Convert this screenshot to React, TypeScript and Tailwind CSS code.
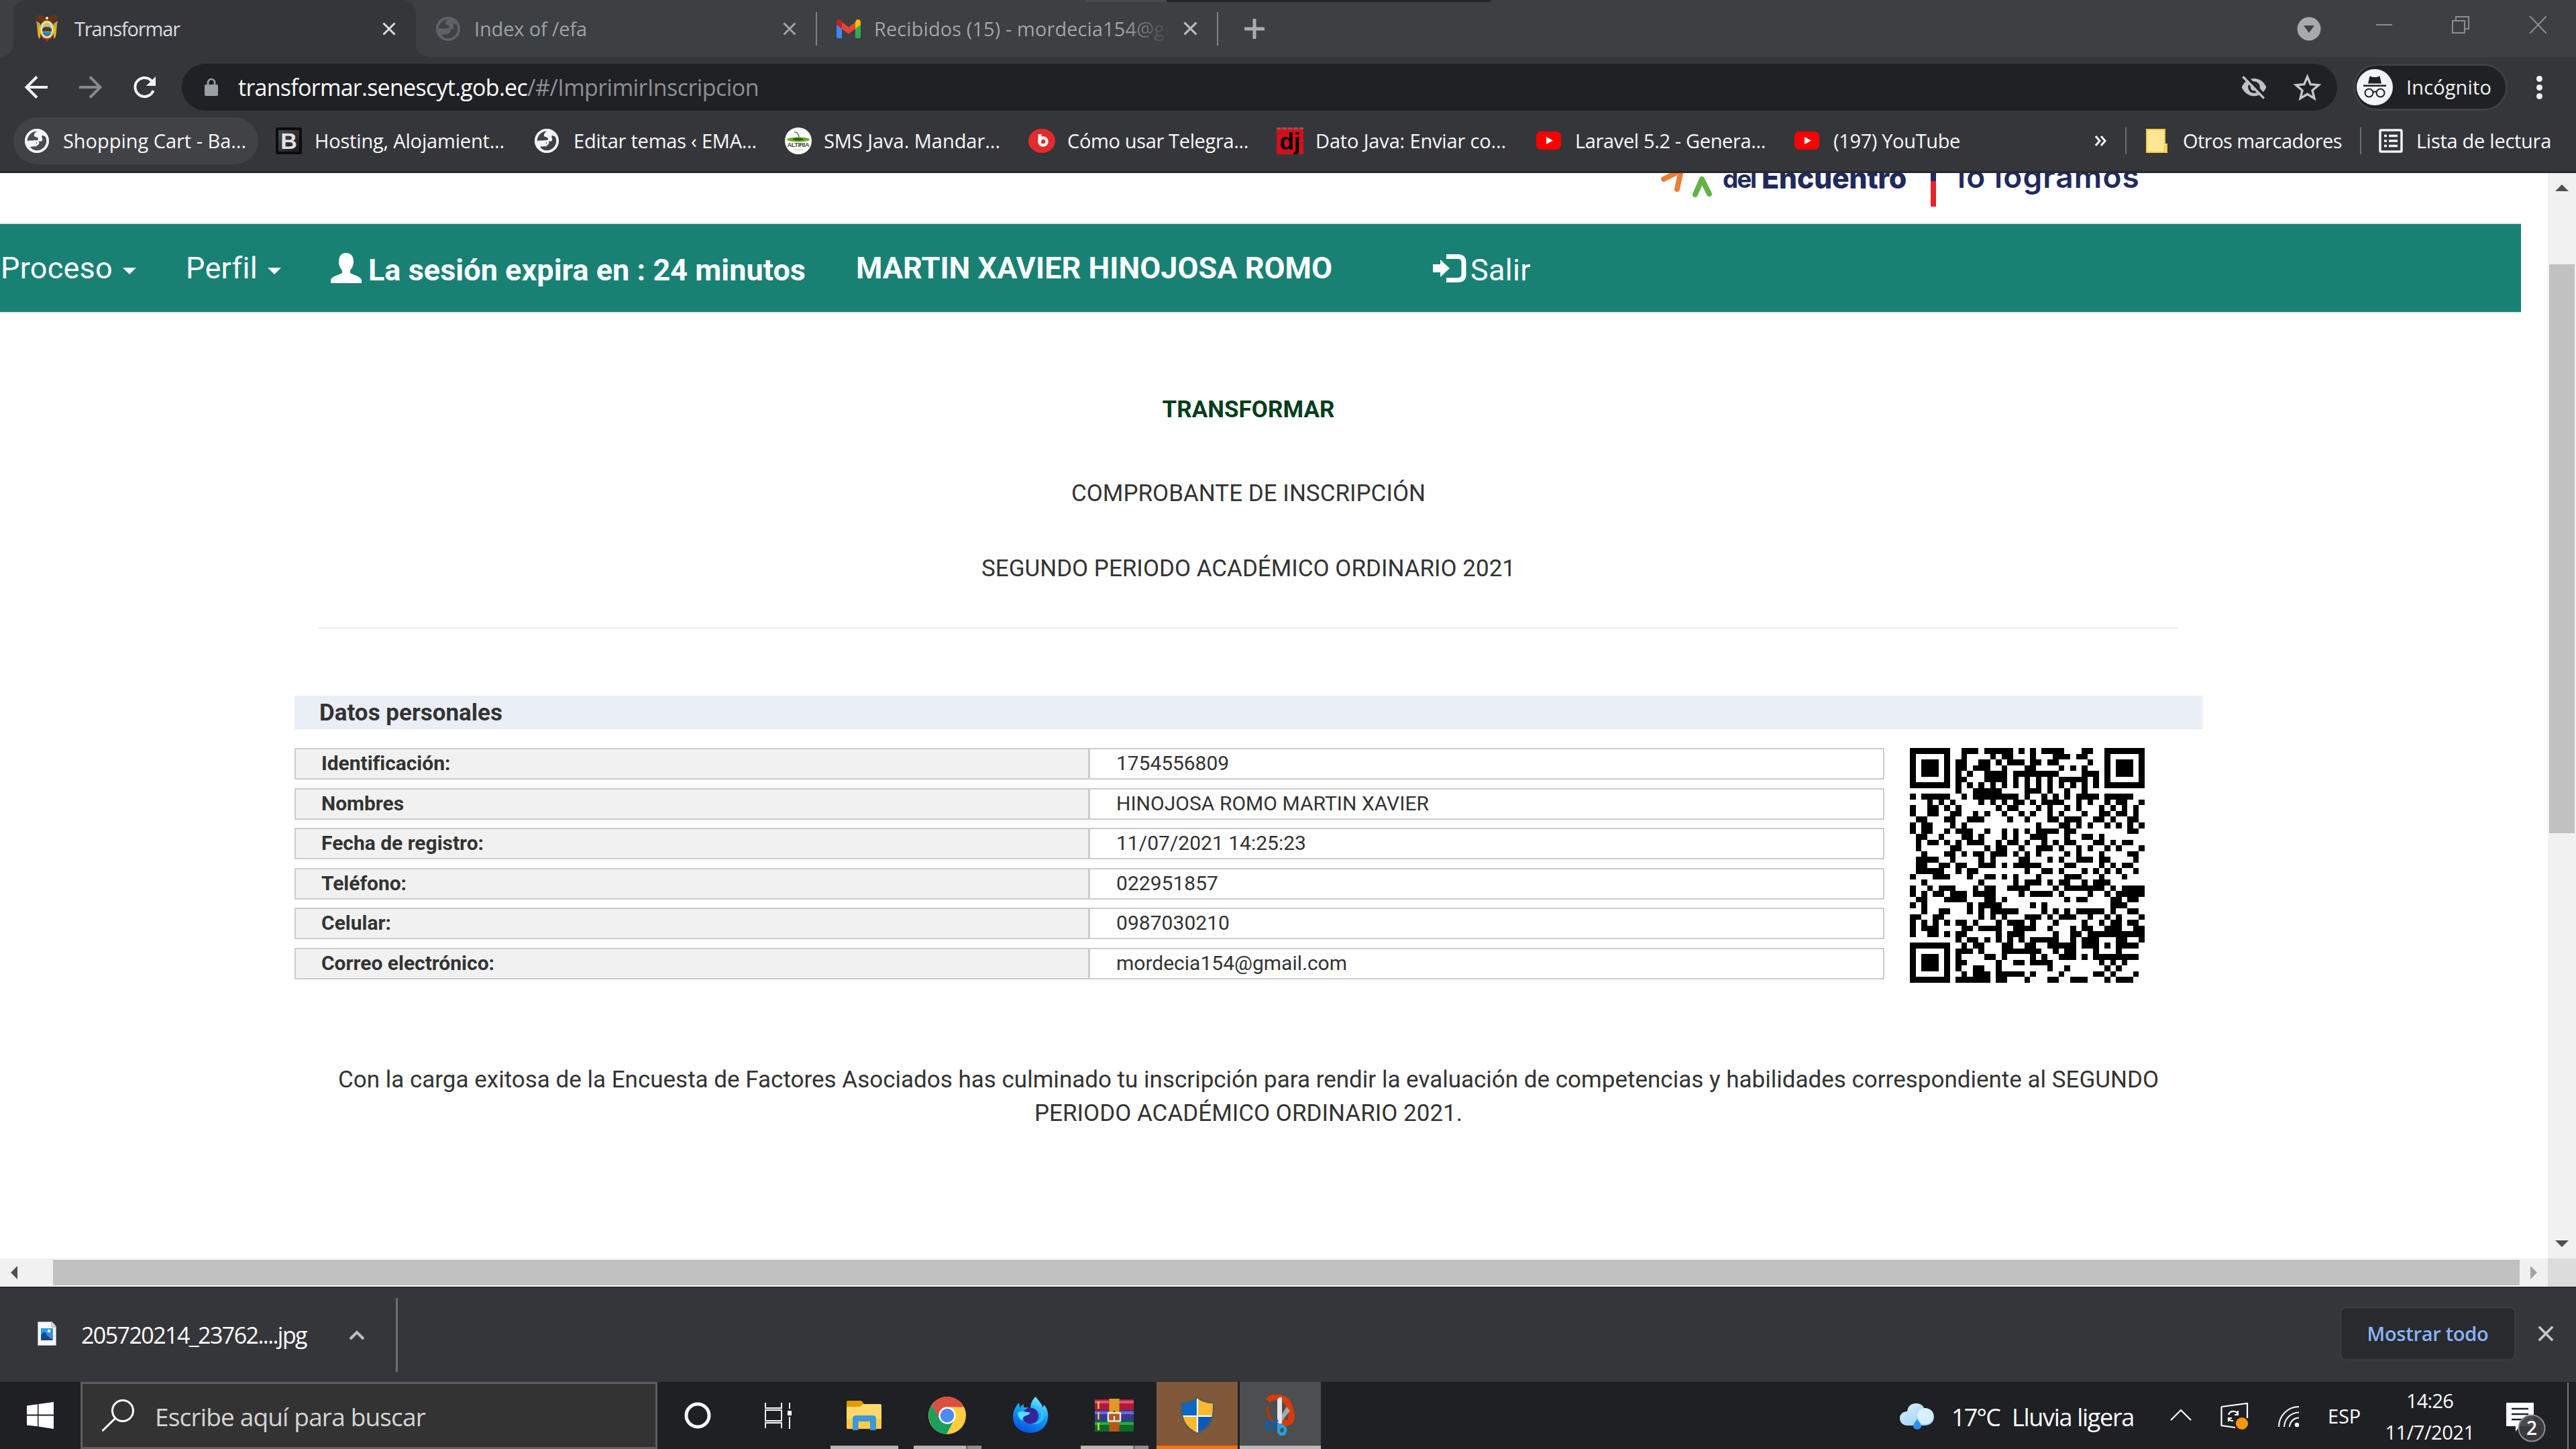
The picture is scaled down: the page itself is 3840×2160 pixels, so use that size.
import { useLayoutEffect, useRef, useState } from "react";
import type { ReactNode } from "react";

/* One line of text whose letter spacing is tuned so that it spans `w` pixels. */
function Fit({ w, className = "", children }: { w: number; className?: string; children: string }) {
  const ref = useRef<HTMLSpanElement>(null);
  const [spacing, setSpacing] = useState(0);
  useLayoutEffect(() => {
    if (ref.current) {
      const natural = ref.current.getBoundingClientRect().width;
      setSpacing((w - natural) / children.length);
    }
  }, [w, children]);
  return (
    <span ref={ref} className={"inline-block whitespace-pre shrink-0 " + className} style={{ letterSpacing: spacing + "px" }}>
      {children}
    </span>
  );
}

function Globe({ color, hole, className }: { color: string; hole: string; className: string }) {
  return (
    <svg viewBox="0 0 36 36" className={className}>
      <circle cx="18" cy="18" r="18" fill={color} />
      <path d="M20 3C15 5 13 8 14 11c2 2 6 1 6 4 0 3-5 2-8 3-3 0-5 1-9 0C3 9 10 2 20 3z" fill={hole} opacity=".95" />
      <path d="M21 33c-6 0-10-2-13-6 3-1 8 0 9-3 1-2-2-4 1-5 4-1 7 1 8-2 1-2-2-5 0-7 2 0 5 1 6 4 3 10-4 18-11 19z" fill={hole} opacity=".95" />
      <circle cx="18" cy="18" r="16" fill="none" stroke={color} strokeWidth="3.5" />
      <path d="M5 19h7c4-1 8 0 8 2s-4 3-5 5" fill="none" stroke={color} strokeWidth="3" />
    </svg>
  );
}

function Cross({ className }: { className: string }) {
  return (
    <svg viewBox="0 0 20 20" className={className}>
      <path d="M1.5 1.5l17 17M18.5 1.5l-17 17" stroke="currentColor" strokeWidth="3" fill="none" />
    </svg>
  );
}

function YouTube() {
  return (
    <svg viewBox="0 0 38 28" className="w-[38px] h-[28px]">
      <rect width="37" height="27" rx="7" fill="#f00" />
      <path d="M15 8l10 5.5L15 19z" fill="#fff" />
    </svg>
  );
}

function Crest() {
  return (
    <svg viewBox="0 0 36 40" className="w-[36px] h-[40px] shrink-0">
      <path d="M1 1c5-2 11-1 14 2l3-2 3 2c3-3 9-4 14-2-2 5-6 7-10 8H11C7 8 3 6 1 1z" fill="#6b3410" />
      <path d="M2 8l6 4v20l-1 3C3 32 4 16 2 8zM34 8l-6 4v20l1 3c4-3 3-19 5-27z" fill="#b9a15a" />
      <path d="M5 18l3-4v20l-3-4zM31 18l-3-4v20l3-4z" fill="#e8b800" />
      <path d="M8 26l4 9 3 1-3-12zM28 26l-4 9-3 1 3-12z" fill="#c8202c" />
      <ellipse cx="18" cy="21" rx="11" ry="13.500" fill="#f4c400" />
      <ellipse cx="18" cy="21" rx="9" ry="12" fill="#e8e8ee" />
      <ellipse cx="18" cy="21" rx="7" ry="10.500" fill="#79c9ee" />
      <circle cx="18" cy="14" r="3" fill="#f2b93a" />
      <path d="M11 20c3-4 11-4 14 0v4H11z" fill="#5a3a1c" />
      <path d="M11.500 25h13c-1 4-4 6-6.500 6s-5.500-2-6.500-6z" fill="#2b7fae" />
      <path d="M15 35h6l-3 5z" fill="#cf1f2c" />
      <circle cx="18" cy="4" r="2" fill="#eee" />
    </svg>
  );
}

function Gmail() {
  return (
    <svg viewBox="0 0 36 28" className="w-[36px] h-[28px] shrink-0">
      <path d="M0 4v21.500Q0 28 2.500 28H8V10z" fill="#4285f4" />
      <path d="M36 4v21.500Q36 28 33.500 28H28V10z" fill="#34a853" />
      <path d="M28 4v10l8-6V4c0-4-4-5-6.500-3z" fill="#fbbc04" />
      <path d="M8 14V4l10 7.500L28 4v10l-10 7.500z" fill="#ea4335" />
      <path d="M0 4v4l8 6V4L6.500 1C4-1 0 0 0 4z" fill="#c5221f" />
    </svg>
  );
}

const bookmarks: { box: string; text: string; w: number; icon: ReactNode }[] = [
  { box: "w-[374px]", text: "Shopping Cart - Ba...", w: 273, icon: <Globe color="#f1f3f4" hole="#414246" className="w-[36px] h-[36px]" /> },
  {
    box: "w-[386px]", text: "Hosting, Alojamient...", w: 283,
    icon: (
      <span className="w-[39px] h-[40px] rounded-[3px] border-[4px] border-[#0c0c0c] bg-gradient-to-br from-[#4a4a4a] to-[#1c1c1c] flex items-center justify-center font-['Liberation_Sans'] font-bold text-[34px] leading-none text-[#e2e2e2]">B</span>
    ),
  },
  { box: "w-[373px]", text: "Editar temas ‹ EMA...", w: 273, icon: <Globe color="#f1f3f4" hole="#35363a" className="w-[36px] h-[36px]" /> },
  {
    box: "w-[363px]", text: "SMS Java. Mandar...", w: 263,
    icon: (
      <svg viewBox="0 0 40 40" className="w-[40px] h-[40px]">
        <circle cx="20" cy="20" r="20" fill="#fff" />
        <ellipse cx="20" cy="18" rx="17" ry="3.600" fill="#6fae2c" />
        <ellipse cx="20" cy="17.500" rx="8" ry="2" fill="#2f5d16" />
        <path d="M14 7q7 0 7 9" stroke="#5d7f4a" strokeWidth="1.500" fill="none" />
        <text x="20" y="29" fontSize="9.500" fontWeight="700" textAnchor="middle" fontFamily="Liberation Sans" fill="#3f4f3a" textLength="33">ALTIRIA</text>
        <path d="M13 33h14" stroke="#ccc" strokeWidth="1" />
      </svg>
    ),
  },
  {
    box: "w-[370px]", text: "Cómo usar Telegra...", w: 270,
    icon: (
      <svg viewBox="0 0 40 36" className="w-[40px] h-[36px]">
        <ellipse cx="20" cy="18" rx="20" ry="18" fill="#e22b2f" />
        <path d="M17 8v11" stroke="#fff" strokeWidth="5" />
        <circle cx="22" cy="19" r="5.500" stroke="#fff" strokeWidth="4.500" fill="none" />
      </svg>
    ),
  },
  {
    box: "w-[387px]", text: "Dato Java: Enviar co...", w: 284,
    icon: (
      <span className="w-[40px] h-[40px] bg-[#d0111b] border-t-[3px] border-dashed border-[#8a5a5c] flex items-center justify-center font-['Liberation_Sans'] text-[35px] leading-none text-black font-bold pb-[3px]">dj</span>
    ),
  },
  { box: "w-[385px]", text: "Laravel 5.2 - Genera...", w: 284, icon: <YouTube /> },
  { box: "w-[439px]", text: "(197) YouTube", w: 189, icon: <YouTube /> },
];

function TabStrip() {
  return (
    <div className="relative h-[85px] flex items-center bg-[#3c4043] text-[29px]">
      <div className="absolute left-[1619px] top-0 flex h-[3px]">
        <div className="w-[120px] bg-[#4c4846]" />
        <div className="w-[483px] bg-[#232323]" />
      </div>
      <div className="w-[20px] h-[85px] bg-[#35363a] shrink-0"><div className="w-full h-full bg-[#3c4043] rounded-br-[20px]" /></div>
      <div className="w-[600px] h-[85px] bg-[#35363a] rounded-t-[20px] flex items-center pl-[32px] shrink-0 text-[#dadce0]">
        <Crest />
        <div className="w-[482px] pl-[23px] flex shrink-0"><Fit w={157}>Transformar</Fit></div>
        <Cross className="w-[20px] h-[20px]" />
      </div>
      <div className="w-[20px] h-[85px] bg-[#35363a] shrink-0"><div className="w-full h-full bg-[#3c4043] rounded-bl-[20px]" /></div>
      <div className="flex items-center pl-[10px] w-[576px] text-[#9fa2a6] shrink-0">
        <Globe color="#5f6368" hole="#3c4043" className="w-[36px] h-[36px] shrink-0" />
        <div className="w-[481px] pl-[21px] flex shrink-0"><Fit w={168}>Index of /efa</Fit></div>
        <Cross className="w-[20px] h-[20px]" />
      </div>
      <div className="w-[2px] h-[50px] bg-[#7f8286] shrink-0" />
      <div className="flex items-center pl-[29px] w-[596px] text-[#a2a5a9] shrink-0">
        <Gmail />
        <div className="w-[460px] pl-[20px] flex shrink-0 overflow-hidden [mask-image:linear-gradient(to_right,black_390px,transparent_460px)]">
          <Fit w={460}>Recibidos (15) - mordecia154@gm</Fit>
        </div>
        <Cross className="w-[21px] h-[21px] ml-[21px] shrink-0 text-[#b9bbbe]" />
      </div>
      <div className="w-[2px] h-[50px] bg-[#7f8286] shrink-0" />
      <svg viewBox="0 0 30 30" className="w-[30px] h-[30px] ml-[39px]"><path d="M15 0v30M0 15h30" stroke="#a9acaf" strokeWidth="5" /></svg>
      <svg viewBox="0 0 36 36" className="w-[36px] h-[36px] ml-auto">
        <circle cx="18" cy="18" r="17.500" fill="#a7aaad" />
        <path d="M10 13h16l-8 11z" fill="#3c4043" />
      </svg>
      <svg viewBox="0 0 254 26" className="w-[254px] h-[26px] ml-[82px] mr-[44px] mb-[12px]" fill="none" stroke="#8b8e91" strokeWidth="2">
        <path d="M0 13h24" />
        <path d="M114 7h18v18h-18zM119 7V1h19v18h-6" />
        <path d="M229 0l25 26M254 0l-25 26" />
      </svg>
    </div>
  );
}

function Toolbar() {
  return (
    <div className="h-[90px] flex items-center bg-[#35363a]">
      <svg viewBox="0 0 200 36" className="w-[200px] h-[36px] ml-[35px] shrink-0" fill="none" strokeWidth="4">
        <path d="M36 18H5M20 2.500L4.500 18 20 33.500" stroke="#f1f3f4" />
        <path d="M83 18h31M99 2.500L114.500 18 99 33.500" stroke="#86888b" />
        <path d="M192 10A14 14 0 1 0 193.500 23" stroke="#f1f3f4" />
        <path d="M197 2v14h-14z" fill="#f1f3f4" />
      </svg>
      <div className="ml-[36px] w-[3213px] h-[70px] rounded-full bg-[#202124] flex items-center text-[34px] shrink-0">
        <svg viewBox="0 0 20 28" className="w-[20px] h-[28px] ml-[34px]">
          <rect y="10" width="20" height="17" rx="2" fill="#9aa0a6" />
          <path d="M5 11V7a5 5 0 0 1 10 0v4" fill="none" stroke="#9aa0a6" strokeWidth="2.600" />
        </svg>
        <div className="flex ml-[30px]">
          <Fit w={431} className="text-white">transformar.senescyt.gob.ec</Fit>
          <Fit w={345} className="text-[#8c9095]">/#/ImprimirInscripcion</Fit>
        </div>
        <svg viewBox="0 0 24 24" className="w-[42px] h-[42px] ml-auto mr-[37px]">
          <path d="M1.500 12C3.300 7.500 7.300 4.500 12 4.500S20.700 7.500 22.500 12c-1.800 4.500-5.800 7.500-10.500 7.500S3.300 16.500 1.500 12z" fill="#bdc1c6" />
          <circle cx="12" cy="12" r="5" fill="#202124" />
          <circle cx="12" cy="12" r="3" fill="#bdc1c6" />
          <path d="M4 1.500L22 20" stroke="#202124" strokeWidth="2.500" />
          <path d="M2.500 3L20.500 21.500" stroke="#bdc1c6" strokeWidth="2" />
        </svg>
        <svg viewBox="0 0 24 24" className="w-[43px] h-[43px] mr-[23px]">
          <path d="M12 3l2.600 6.300 6.800.6-5.200 4.500 1.600 6.600-5.800-3.500-5.800 3.500 1.600-6.600L2.600 9.900l6.800-.6z" fill="none" stroke="#c4c7ca" strokeWidth="1.900" />
        </svg>
      </div>
      <div className="ml-[24px] w-[230px] h-[70px] rounded-full border-[3px] border-[#3f4145] bg-[#202124] flex items-center text-[29px] text-[#f1f3f4] shrink-0">
        <svg viewBox="0 0 54 54" className="w-[54px] h-[54px] ml-[2px] mr-[20px]">
          <circle cx="27" cy="27" r="27" fill="#f1f3f4" />
          <path d="M19.500 10.500q3 .5 4.500 1.500h6q1.500-1 4.500-1.500L37 21.500H17z" fill="#202124" />
          <path d="M10 24.800h34" stroke="#202124" strokeWidth="2.600" />
          <g fill="none" stroke="#202124" strokeWidth="2"><circle cx="18.500" cy="35.500" r="6" /><circle cx="35.500" cy="35.500" r="6" /><path d="M24.500 34.500q2.500-2 5 0" /></g>
        </svg>
        <Fit w={127}>Incógnito</Fit>
      </div>
      <div className="ml-[43px] flex flex-col gap-[4px]">
        <div className="w-[9px] h-[9px] rounded-full bg-[#f1f3f4]" />
        <div className="w-[9px] h-[9px] rounded-full bg-[#f1f3f4]" />
        <div className="w-[9px] h-[9px] rounded-full bg-[#f1f3f4]" />
      </div>
    </div>
  );
}

function BookmarksBar() {
  return (
    <div className="h-[80px] pb-[10px] flex items-center bg-[#35363a] text-[29px] text-[#f8f9fa]">
      <div className="w-[37px] shrink-0" />
      {bookmarks.map((b, i) => (
        <div key={b.text} className={"flex items-center h-[70px] shrink-0 " + b.box}>
          {i === 0 ? (
            <div className="flex items-center h-[70px] w-[365px] -ml-[17px] pl-[17px] rounded-full bg-[#414246]">
              {b.icon}
              <Fit w={b.w} className="ml-[21px]">{b.text}</Fit>
            </div>
          ) : (
            <>
              <span className="w-[40px] flex shrink-0">{b.icon}</span>
              <Fit w={b.w} className="ml-[18px]">{b.text}</Fit>
            </>
          )}
        </div>
      ))}
      <svg viewBox="0 0 17 16" className="w-[17px] h-[16px] ml-[9px]" fill="none" stroke="#f1f3f4" strokeWidth="3"><path d="M1 1l6 7-6 7M9 1l6 7-6 7" /></svg>
      <div className="w-[2px] h-[40px] ml-[28px] bg-[#6d6f73]" />
      <svg viewBox="0 0 32 36" className="w-[32px] h-[36px] ml-[29px]">
        <path d="M0 0h29v22h3v14H0z" fill="#ffe693" />
        <path d="M1 1h27v22M1 1v34h30V24l-3 3v8" fill="none" stroke="#efca4a" strokeWidth="2" />
      </svg>
      <Fit w={237} className="ml-[23px]">Otros marcadores</Fit>
      <div className="w-[2px] h-[40px] ml-[27px] bg-[#6d6f73]" />
      <svg viewBox="0 0 36 36" className="w-[36px] h-[36px] ml-[26px]">
        <rect x="2" y="2" width="32" height="32" rx="1.500" fill="none" stroke="#f1f3f4" strokeWidth="3.500" />
        <path d="M8 10.500h4M8 18h4M8 25.500h4M15 10.500h13M15 18h13M15 25.500h13" stroke="#f1f3f4" strokeWidth="3.500" />
      </svg>
      <Fit w={201} className="ml-[20px]">Lista de lectura</Fit>
    </div>
  );
}

function Banner() {
  return (
    <div className="h-[74px] overflow-hidden flex pl-[2476px] text-[#1f2a5c] font-['Inter'] leading-[60px]">
      <svg viewBox="0 0 80 40" className="w-[80px] h-[40px] shrink-0" fill="none" strokeWidth="8" strokeLinecap="round">
        <path d="M4 9L30-4L24 24" stroke="#ea7e37" />
        <path d="M51 32L61 9L72 31" stroke="#63b346" strokeLinejoin="round" />
      </svg>
      <Fit w={49} className="ml-[12px] mt-[-21px] text-[37px] font-bold">del</Fit>
      <Fit w={216} className="ml-[9px] mt-[-23px] text-[43px] font-extrabold">Encuentro</Fit>
      <div className="w-[8px] ml-[36px] shrink-0"><div className="h-[12px] bg-[#1f2a5c]" /><div className="h-[38px] bg-[#e3222f]" /></div>
      <Fit w={272} className="ml-[32px] mt-[-25px] text-[46px] font-semibold">lo logramos</Fit>
    </div>
  );
}

function Caret({ className }: { className: string }) {
  return <svg viewBox="0 0 20 10" className={"w-[20px] h-[10px] shrink-0 " + className}><path d="M0 0h20L10 10z" fill="#fff" /></svg>;
}

function NavBar() {
  return (
    <nav className="w-[3758px] h-[135px] border-y-[2px] border-[#e7e7e7] bg-[#198174] text-white text-[45px] font-['Roboto'] flex items-center pl-[1px]">
      <Fit w={167}>Proceso</Fit>
      <Caret className="ml-[15px] mt-[8px]" />
      <Fit w={105} className="ml-[74px]">Perfil</Fit>
      <Caret className="ml-[15px] mt-[8px]" />
      <svg viewBox="0 0 46 45" className="w-[46px] h-[45px] ml-[74px] shrink-0">
        <path d="M23 0c7 0 11 5 11 13 0 7-3 10-5 13v4c5 3 17 5 17 11v4H0v-4c0-6 12-8 17-11v-4c-2-3-5-6-5-13C12 5 16 0 23 0z" fill="#fff" />
      </svg>
      <Fit w={652} className="ml-[10px] mt-[6px] font-bold">La sesión expira en : 24 minutos</Fit>
      <Fit w={710} className="ml-[75px] font-bold">MARTIN XAVIER HINOJOSA ROMO</Fit>
      <svg viewBox="0 0 50 42" className="w-[50px] h-[42px] ml-[150px] shrink-0">
        <path d="M0 15h11V8l14 13-14 13v-7H0z" fill="#fff" />
        <path d="M20 3.500h17q9 0 9 8.500v18q0 8.500-9 8.500H20" fill="none" stroke="#fff" strokeWidth="7" />
      </svg>
      <Fit w={90} className="ml-[6px] mt-[6px]">Salir</Fit>
    </nav>
  );
}

/* Dark module runs of every QR row, as inclusive column ranges. */
const qrRows = [
  "0-6 9-11 13-17 19 21 23-26 30-31 34-40",
  "0 6 9 14 16-17 21 25-27 29-30 34 40",
  "0 2-4 6 8-9 12-13 15 17-19 21-22 24-25 31 34 36-38 40",
  "0 2-4 6 8-9 11-13 16 20-21 26 28 30 34 36-38 40",
  "0 2-4 6 8 10 13-16 18-25 30-32 34 36-38 40",
  "0 6 8-9 13-16 18 20 22 24 26-30 32 34 40",
  "0-6 8 10 12 14 16 18 20 22 24 26 28 30 32 34-40",
  "8 11-15 20-22 24 27 30",
  "0 2-6 9 11-18 20 23 25 27 29-32 34-38",
  "3 5 7 12 14 16 18-19 21 23-26 29 31 34 36-37 40",
  "0 3-4 6 8 15 17-18 22 24 27 29 33 35 37 39",
  "0 3-4 7-8 11 13 16 19 21 24 26 30 33-34 36-37 39",
  "1-2 6-7 10-12 17 20 24-25 27-29 32-33 35 38-39",
  "0 2-3 7 9 22 26-27 29 31 34 36 38 40",
  "0 2-3 6 8-10 13 16 18 20 22-25 27-28 38-39",
  "1-2 5 9-10 12 16 18 21-23 27 30-31 33",
  "1 3-4 6 8 10-12 15 17-18 20 23 25 27-28 32-33 35 37-38",
  "1 7-8 13 15-16 19 22-24 26 29 31 34 36 40",
  "2 6-7 9 11-12 14-16 18 20 22 27 29 33 38-39",
  "1-4 7 12 14 19-20 24 26 29-31 33-34 39",
  "1-2 5-6 8-9 12-14 16 18-22 27-28 33 35 37-38",
  "1-5 8 10-11 20 23-24 26 30 32 34 36 39",
  "0 4-6 10 13-14 16 18 22 27-29 33 37",
  "2 12 18 20-22 24 26-27 30 32-34",
  "0 3 5-7 11 13-14 17-20 25 27-33 35 37-40",
  "0 2 4-5 7-9 11-14 19 21-24 26 31 34 36-40",
  "1-2 6-9 13-14 16 27 29-30 35-36 38-39",
  "0 2 10 12-15 21 23 35-37",
  "2 5-6 10 12 14-18 23 25 27 29-33 35 38-39",
  "0-1 4-5 12 14 16 20-22 24 26-28 31 34 36 40",
  "0 2 4 6 8-9 11 15 17-19 21 25 30 33 35-36 38-39",
  "0 2-4 9-10 12-15 18-21 24 28 30-31 34-36 39-40",
  "0 3-4 6 8-9 15 17-19 25 28-29 31-40",
  "8 10-11 13 15 17 19 21-25 28 30-32 36-37 40",
  "0-6 9 11-12 16-17 20-21 24-28 30-32 34 36-39",
  "0 6 8-10 12 16-22 25 27-28 32 36",
  "0 2-4 6 8 13-14 16 21 23 26-28 30 32-39",
  "0 2-4 6 8-9 15 18-19 21-24 33 35 37",
  "0 2-4 6 8 11-12 15 24 27 34 36",
  "0 6 9 11-13 15-19 21 26 32-33 35 39",
  "0-6 8-13 15-16 20 24-25 28-30 34 36-38",
];

function QrCode() {
  const d = qrRows
    .map((row, y) =>
      row
        .split(" ")
        .map((run) => {
          const [a, b = a] = run.split("-").map(Number);
          return `M${a} ${y}h${b - a + 1}v1h-${b - a + 1}z`;
        })
        .join("")
    )
    .join("");
  return <svg viewBox="0 0 41 41" className="w-[350px] h-[350px]" shapeRendering="crispEdges"><path d={d} /></svg>;
}

const fields = [
  { label: "Identificación:", lw: 192, value: "1754556809", vw: 168 },
  { label: "Nombres", lw: 123, value: "HINOJOSA ROMO MARTIN XAVIER", vw: 466 },
  { label: "Fecha de registro:", lw: 242, value: "11/07/2021 14:25:23", vw: 283 },
  { label: "Teléfono:", lw: 127, value: "022951857", vw: 152 },
  { label: "Celular:", lw: 104, value: "0987030210", vw: 169 },
  { label: "Correo electrónico:", lw: 258, value: "mordecia154@gmail.com", vw: 344 },
];

function Page() {
  return (
    <div className="w-[3798px] h-[1618px] bg-white overflow-hidden font-['Roboto'] text-[#333] text-[35px] leading-[50px]">
      <Banner />
      <NavBar />
      <div className="w-[3722px] text-center pt-[119px]">
        <div className="font-bold text-[#003d1c] flex justify-center"><Fit w={257}>TRANSFORMAR</Fit></div>
        <div className="mt-[75px] flex justify-center"><Fit w={528}>COMPROBANTE DE INSCRIPCIÓN</Fit></div>
        <div className="mt-[62px] flex justify-center"><Fit w={796}>SEGUNDO PERIODO ACADÉMICO ORDINARIO 2021</Fit></div>
      </div>
      <div className="ml-[475px] mt-[62px] w-[2772px] h-[2px] bg-[#eee]" />
      <div className="ml-[439px] mt-[100px] w-[2845px] h-[50px] pt-[2px] bg-[#eaeef6] pl-[37px] font-bold flex items-center"><Fit w={273}>Datos personales</Fit></div>
      <div className="flex ml-[439px] mt-[28px] text-[30px] leading-[43px]">
        <div className="w-[2370px] flex flex-col gap-[12.5px]">
          {fields.map((f) => (
            <div key={f.label} className="h-[47px] flex border-2 border-[#ccc]">
              <div className="w-[1184px] border-r-[3px] border-[#ccc] bg-[#f1f1f1] pl-[38px] pb-[2px] font-bold flex items-center"><Fit w={f.lw}>{f.label}</Fit></div>
              <div className="pl-[39px] pb-[2px] flex items-center"><Fit w={f.vw}>{f.value}</Fit></div>
            </div>
          ))}
        </div>
        <div className="ml-[38px]"><QrCode /></div>
      </div>
      <div className="w-[3722px] mt-[120px] flex flex-col items-center">
        <Fit w={2714}>Con la carga exitosa de la Encuesta de Factores Asociados has culminado tu inscripción para rendir la evaluación de competencias y habilidades correspondiente al SEGUNDO</Fit>
        <Fit w={638}>PERIODO ACADÉMICO ORDINARIO 2021.</Fit>
      </div>
    </div>
  );
}

function Viewport() {
  return (
    <div className="flex flex-col border-t-[3px] border-[#28292c] bg-[#f1f1f1]">
      <div className="flex h-[1618px]">
        <Page />
        <div className="w-[42px] flex flex-col items-center bg-[#f1f1f1]">
          <svg viewBox="0 0 20 10" className="w-[20px] h-[10px] mt-[17px]"><path d="M0 10h20L10 0z" fill="#505050" /></svg>
          <div className="w-[38px] h-[848px] mt-[109px] bg-[#c1c1c1]" />
          <svg viewBox="0 0 20 10" className="w-[20px] h-[10px] mt-auto mb-[17px]"><path d="M0 0h20L10 10z" fill="#505050" /></svg>
        </div>
      </div>
      <div className="flex h-[42px] items-center">
        <svg viewBox="0 0 10 20" className="w-[10px] h-[20px] ml-[16px]"><path d="M10 0v20L0 10z" fill="#505050" /></svg>
        <div className="ml-[53px] w-[3677px] h-[38px] bg-[#c1c1c1]" />
        <svg viewBox="0 0 10 20" className="w-[10px] h-[20px] ml-[16px]"><path d="M0 0v20l10-10z" fill="#a3a3a3" /></svg>
        <div className="ml-auto w-[42px] h-[42px] bg-[#dcdcdc]" />
      </div>
    </div>
  );
}

function DownloadShelf() {
  return (
    <div className="h-[142px] border-t-2 border-[#28292c] bg-[#35363a] flex items-center">
      <svg viewBox="0 0 28 36" className="w-[28px] h-[36px] ml-[56px] mb-[4px]">
        <path d="M.5.500h21l6 7v28H.5z" fill="#f7f7f7" stroke="#a9a9a9" />
        <path d="M21 0v8h7" fill="#ddd" stroke="#999" />
        <path d="M5 10h18v18H5z" fill="#26a0ea" />
        <path d="M5 20l5-5 13 13H5z" fill="#114a8b" />
        <path d="M13 20l4-3 6 5v6z" fill="#4c7fd6" />
        <circle cx="17" cy="14" r="2.200" fill="#fff" />
      </svg>
      <Fit w={336} className="ml-[37px] text-[34px] text-white">205720214_23762....jpg</Fit>
      <svg viewBox="0 0 24 15" className="w-[24px] h-[15px] ml-[63px]"><path d="M2 13L12 3l10 10" fill="none" stroke="#bdc1c6" strokeWidth="4" /></svg>
      <div className="w-[3px] h-[110px] ml-[46px] bg-[#6d6f73]" />
      <div className="ml-auto w-[262px] h-[80px] mb-[4px] rounded-[10px] border-2 border-[#3c3d41] bg-[#292a2d] flex items-center justify-center text-[29px] font-semibold text-[#8ab4f8]">
        <Fit w={181}>Mostrar todo</Fit>
      </div>
      <Cross className="w-[24px] h-[24px] ml-[33px] mr-[33px] mb-[4px] text-[#c4c7ca]" />
    </div>
  );
}

function FolderIcon() {
  return (
    <svg viewBox="0 0 54 46" className="w-[54px] h-[46px]">
      <path d="M1 10V3q0-2 2-2h18q2 0 3 1l3 4-6 5H1z" fill="#e29b00" />
      <path d="M1 10h20l5-4h25q2 0 2 2v33q0 2-2 2H3q-2 0-2-2z" fill="#ffd86e" />
      <path d="M1 28h52v13q0 2-2 2H3q-2 0-2-2z" fill="#fdcb48" />
      <path d="M10 45V28q0-5 5-5h25q5 0 5 5v17h-9V32H18.500v13z" fill="#3d97d8" />
    </svg>
  );
}

function ChromeIcon() {
  return (
    <svg viewBox="0 0 56 56" className="w-[56px] h-[56px]">
      <circle cx="28" cy="28" r="28" fill="#ffcd41" />
      <path d="M5.200 12.500A28 28 0 0 0 27 56l11-21-21-2z" fill="#1a9f5e" />
      <path d="M28 0a28 28 0 0 1 24.500 15.500H30L17 34 5.200 12.500A28 28 0 0 1 28 0z" fill="#dc4e41" />
      <circle cx="28" cy="28" r="12.700" fill="#fff" />
      <circle cx="28" cy="28" r="10.300" fill="#4b8bf5" />
    </svg>
  );
}

function FirefoxIcon() {
  return (
    <svg viewBox="0 0 54 56" className="w-[54px] h-[56px]">
      <defs>
        <linearGradient id="fx" x1="0.800" y1="0" x2="0.400" y2="1">
          <stop offset="0" stopColor="#7ff3ff" /><stop offset=".45" stopColor="#12a5fb" /><stop offset="1" stopColor="#0a55dc" />
        </linearGradient>
      </defs>
      <path d="M35 0c3 5 8 9 10 15l1 1 1-4c5 5 7 12 6 19-1 14-12 23-26 23S1 45 1 30c0-8 3-13 5-16 1-2 3-4 4-5l1 7 6-5 0 5c4 0 7 0 10 2 0-6 2-13 8-18z" fill="url(#fx)" />
      <circle cx="27" cy="28.500" r="12" fill="#32249b" />
      <path d="M8 24c4-3 10-2 14-1 4 0 5 1 4 2-1 2-5 3-7 4-3 1-4 4-3 7-5-2-8-7-8-12z" fill="#55dcff" />
      <path d="M34 14c8 4 11 12 7 19-3 6-9 7-13 7 9 3 19-2 20-12 0-7-6-14-14-14z" fill="#36c6f8" opacity=".8" />
    </svg>
  );
}

function WinrarIcon() {
  return (
    <svg viewBox="0 0 58 50" className="w-[58px] h-[50px]">
      <rect y="1" width="58" height="16" rx="1" fill="#b01a3a" /><rect y="3" width="58" height="4" fill="#e0536e" />
      <rect y="17" width="58" height="16" rx="1" fill="#3a3894" /><rect y="19" width="58" height="4" fill="#6d6bd8" />
      <rect y="33" width="58" height="16" rx="1" fill="#0f6a26" /><rect y="35" width="58" height="4" fill="#2cab48" />
      <path d="M5.500 4v11M5.500 20v11M5.500 36v11" stroke="#f3d02d" strokeWidth="2.400" />
      <rect x="21.500" width="15" height="49" fill="#b45a16" /><rect x="21.500" width="15" height="23" fill="#dc9a24" />
      <path d="M21.500 34h15" stroke="#6b3208" strokeWidth="2" />
      <rect x="20" y="21" width="18" height="12.500" rx="1" fill="none" stroke="#e8e8e8" strokeWidth="2.600" />
      <path d="M29 26v7" stroke="#fff" strokeWidth="2" />
      <circle cx="29" cy="19" r="1.300" fill="#6b3208" />
    </svg>
  );
}

function ShieldIcon() {
  return (
    <svg viewBox="0 0 54 58" className="w-[54px] h-[58px]">
      <defs><clipPath id="sh"><path d="M27 2c7 6 15 8 24 8 1 22-3 37-24 46C6 47 2 32 3 10c9 0 17-2 24-8z" /></clipPath></defs>
      <g clipPath="url(#sh)">
        <path d="M0 0h27v30H0z" fill="#0a67c2" /><path d="M27 0h27v30H27z" fill="#fdb832" />
        <path d="M0 30h27v28H0z" fill="#fdb832" /><path d="M27 30h27v28H27z" fill="#0a5ab8" />
        <path d="M27 0v58M0 30h54" stroke="#fff" strokeWidth="2.200" />
      </g>
      <path d="M27 2c7 6 15 8 24 8 1 22-3 37-24 46C6 47 2 32 3 10c9 0 17-2 24-8z" fill="none" stroke="#5b5a55" strokeWidth="2.500" />
    </svg>
  );
}

function SnipIcon() {
  return (
    <svg viewBox="0 0 50 62" className="w-[50px] h-[62px]" fill="none">
      <path d="M6 9C14-1 34 2 39 20c4 12 3 20-4 22-4 1-7-2-9-5" stroke="#d83b08" strokeWidth="9" />
      <path d="M6 17C4 28 9 38 17 41" stroke="#b8330a" strokeWidth="3.500" />
      <path d="M20 40L34 18l5 6-14 18z" fill="#a9a9a9" />
      <path d="M20 42V8q2-5 7-4v40z" fill="#e6e6e6" />
      <ellipse cx="9" cy="46" rx="5.500" ry="5" stroke="#0d5fae" strokeWidth="4.500" />
      <path d="M14 42l7-4" stroke="#0d5fae" strokeWidth="4" />
      <ellipse cx="27" cy="53" rx="5" ry="6" stroke="#25a2ea" strokeWidth="4.500" />
      <path d="M23.500 43v7" stroke="#25a2ea" strokeWidth="7" />
    </svg>
  );
}

function TaskButton({ className, bar, children }: { className: string; bar?: ReactNode; children: ReactNode }) {
  return (
    <div className={"h-[100px] flex flex-col items-center shrink-0 " + className}>
      <div className="h-[95px] pt-[5px] flex items-center justify-center">{children}</div>
      <div className="h-[5px] w-full flex justify-center">{bar}</div>
    </div>
  );
}

function Taskbar() {
  const single = <div className="w-[101px] bg-[#b5b5b3]" />;
  const stacked = (<><div className="w-[78px] bg-[#b5b5b3]" /><div className="w-[3px] bg-[#6d6d6d]" /><div className="w-[20px] bg-[#8e8e8e]" /></>);
  return (
    <div className="h-[100px] bg-[#1f2024] flex items-center text-white overflow-hidden">
      <svg viewBox="0 0 40 40" className="w-[40px] h-[40px] ml-[40px] mr-[40px] shrink-0" fill="#fff">
        <path d="M0 5.500L16 3.200V18.500H0zM17.500 3L40 0v18.500H17.500zM0 20.500h16v15.800L0 34.500zM17.500 20.500H40V40l-22.500-3.500z" />
      </svg>
      <div className="w-[860px] h-[100px] border-[3px] border-[#5f5f5f] bg-[#333] flex items-center shrink-0 pl-[28px]">
        <svg viewBox="0 0 50 48" className="w-[50px] h-[48px]" fill="none" stroke="#fff" strokeWidth="3"><circle cx="32" cy="17" r="15.500" /><path d="M21 28L1.500 47" /></svg>
        <Fit w={403} className="ml-[30px] mt-[4px] text-[37px] text-[#d5d5d5]">Escribe aquí para buscar</Fit>
      </div>
      <TaskButton className="w-[120px]">
        <svg viewBox="0 0 40 40" className="w-[40px] h-[40px]"><circle cx="20" cy="20" r="17" fill="none" stroke="#fff" strokeWidth="5" /></svg>
      </TaskButton>
      <TaskButton className="w-[120px]">
        <svg viewBox="0 0 42 40" className="w-[42px] h-[40px]" fill="none" stroke="#fff" strokeWidth="2">
          <path d="M2 1v8h24V1M2 39v-8h24v8M2 12h24v16H2zM38 1v9M38 22v18" />
          <rect x="36" y="14" width="4" height="5" fill="#fff" />
        </svg>
      </TaskButton>
      <TaskButton className="w-[136px]" bar={single}><FolderIcon /></TaskButton>
      <TaskButton className="w-[112px]" bar={stacked}><ChromeIcon /></TaskButton>
      <TaskButton className="w-[136px]"><FirefoxIcon /></TaskButton>
      <TaskButton className="w-[114px]" bar={stacked}><WinrarIcon /></TaskButton>
      <div className="w-[6px] shrink-0" />
      <TaskButton className="w-[121px] bg-[#81583a]" bar={<div className="w-full bg-[#ff7300]" />}><ShieldIcon /></TaskButton>
      <div className="w-[3px] shrink-0" />
      <TaskButton className="w-[121px] bg-[#4d4e50]" bar={<div className="w-full bg-[#b9b9b7]" />}><SnipIcon /></TaskButton>

      <div className="ml-auto flex items-center h-[100px] pt-[2px]">
        <svg viewBox="0 0 52 40" className="w-[52px] h-[40px]">
          <defs><linearGradient id="cl" x1="0" y1="0" x2="1" y2="1"><stop offset="0" stopColor="#d9f1ff" /><stop offset="1" stopColor="#8fcdf5" /></linearGradient></defs>
          <path d="M12 34C4 34 0 29 0 23s5-10 11-10C12 5 17 1 24 1c6 0 10 2 12 7 9 0 15 5 15 13 0 8-6 13-14 13z" fill="url(#cl)" />
          <circle cx="38" cy="20" r="12" fill="#e2f4ff" opacity=".8" />
          <path d="M26 24c3 5 6 8 6 11a6 5 0 0 1-12 0c0-3 3-6 6-11z" fill="#2f8fea" />
        </svg>
        <Fit w={72} className="ml-[25px] mt-[4px] text-[36px]">17°C</Fit>
        <Fit w={182} className="ml-[18px] mt-[4px] text-[36px]">Lluvia ligera</Fit>
        <svg viewBox="0 0 32 18" className="w-[32px] h-[18px] ml-[54px] mb-[4px]" fill="none" stroke="#fff" strokeWidth="2.200"><path d="M1 17L16 2l15 15" /></svg>
        <svg viewBox="0 0 42 40" className="w-[42px] h-[40px] ml-[43px]" fill="none" stroke="#fff" strokeWidth="2.200">
          <path d="M1.500 6L40 1v22M1.500 6v28L22 37" />
          <path d="M12 18q2-6 9-5 4 1 5 5M26 12v6h-5M19 27q-6 0-7-4M12 28v-5h5" />
          <circle cx="32" cy="31" r="9" fill="#ff9800" stroke="none" />
        </svg>
        <svg viewBox="0 0 32 32" className="w-[32px] h-[32px] ml-[44px] mt-[2px]" fill="none" stroke="#fff" strokeWidth="2">
          <path d="M1 31A30 30 0 0 1 31 1M9 31A22 22 0 0 1 31 9.500M17 31A14 14 0 0 1 31 17.500" />
          <circle cx="28" cy="28" r="3.200" fill="#fff" stroke="none" />
        </svg>
        <Fit w={49} className="ml-[42px] text-[29px]">ESP</Fit>
        <div className="ml-[36px] mr-[3px] w-[134px] flex flex-col items-center text-[29px] leading-[47px]">
          <Fit w={70}>14:26</Fit>
          <Fit w={133}>11/7/2021</Fit>
        </div>
        <svg viewBox="0 0 62 60" className="w-[62px] h-[60px] ml-[44px] mt-[20px]">
          <path d="M0 0h41v35H20l-6 8v-8H0z" fill="#fff" />
          <path d="M8 9h25M8 17h25M8 25h16" stroke="#1f2024" strokeWidth="2.500" />
          <circle cx="38" cy="38" r="19.500" fill="#3b3c3f" fillOpacity=".93" stroke="#8f8f8f" strokeWidth="2" />
          <text x="38" y="48" textAnchor="middle" fontSize="28" fontFamily="Open Sans" fontWeight="600" fill="#fff">2</text>
        </svg>
        <div className="w-[2px] h-[100px] ml-[29px] mr-[11px] bg-[#77787b]" />
      </div>
    </div>
  );
}

export default function App() {
  return (
    <div className="w-[3840px] h-[2160px] overflow-hidden font-['Open_Sans','Noto_Sans',sans-serif] leading-[50px] bg-[#35363a]">
      <TabStrip />
      <Toolbar />
      <BookmarksBar />
      <Viewport />
      <DownloadShelf />
      <Taskbar />
    </div>
  );
}
